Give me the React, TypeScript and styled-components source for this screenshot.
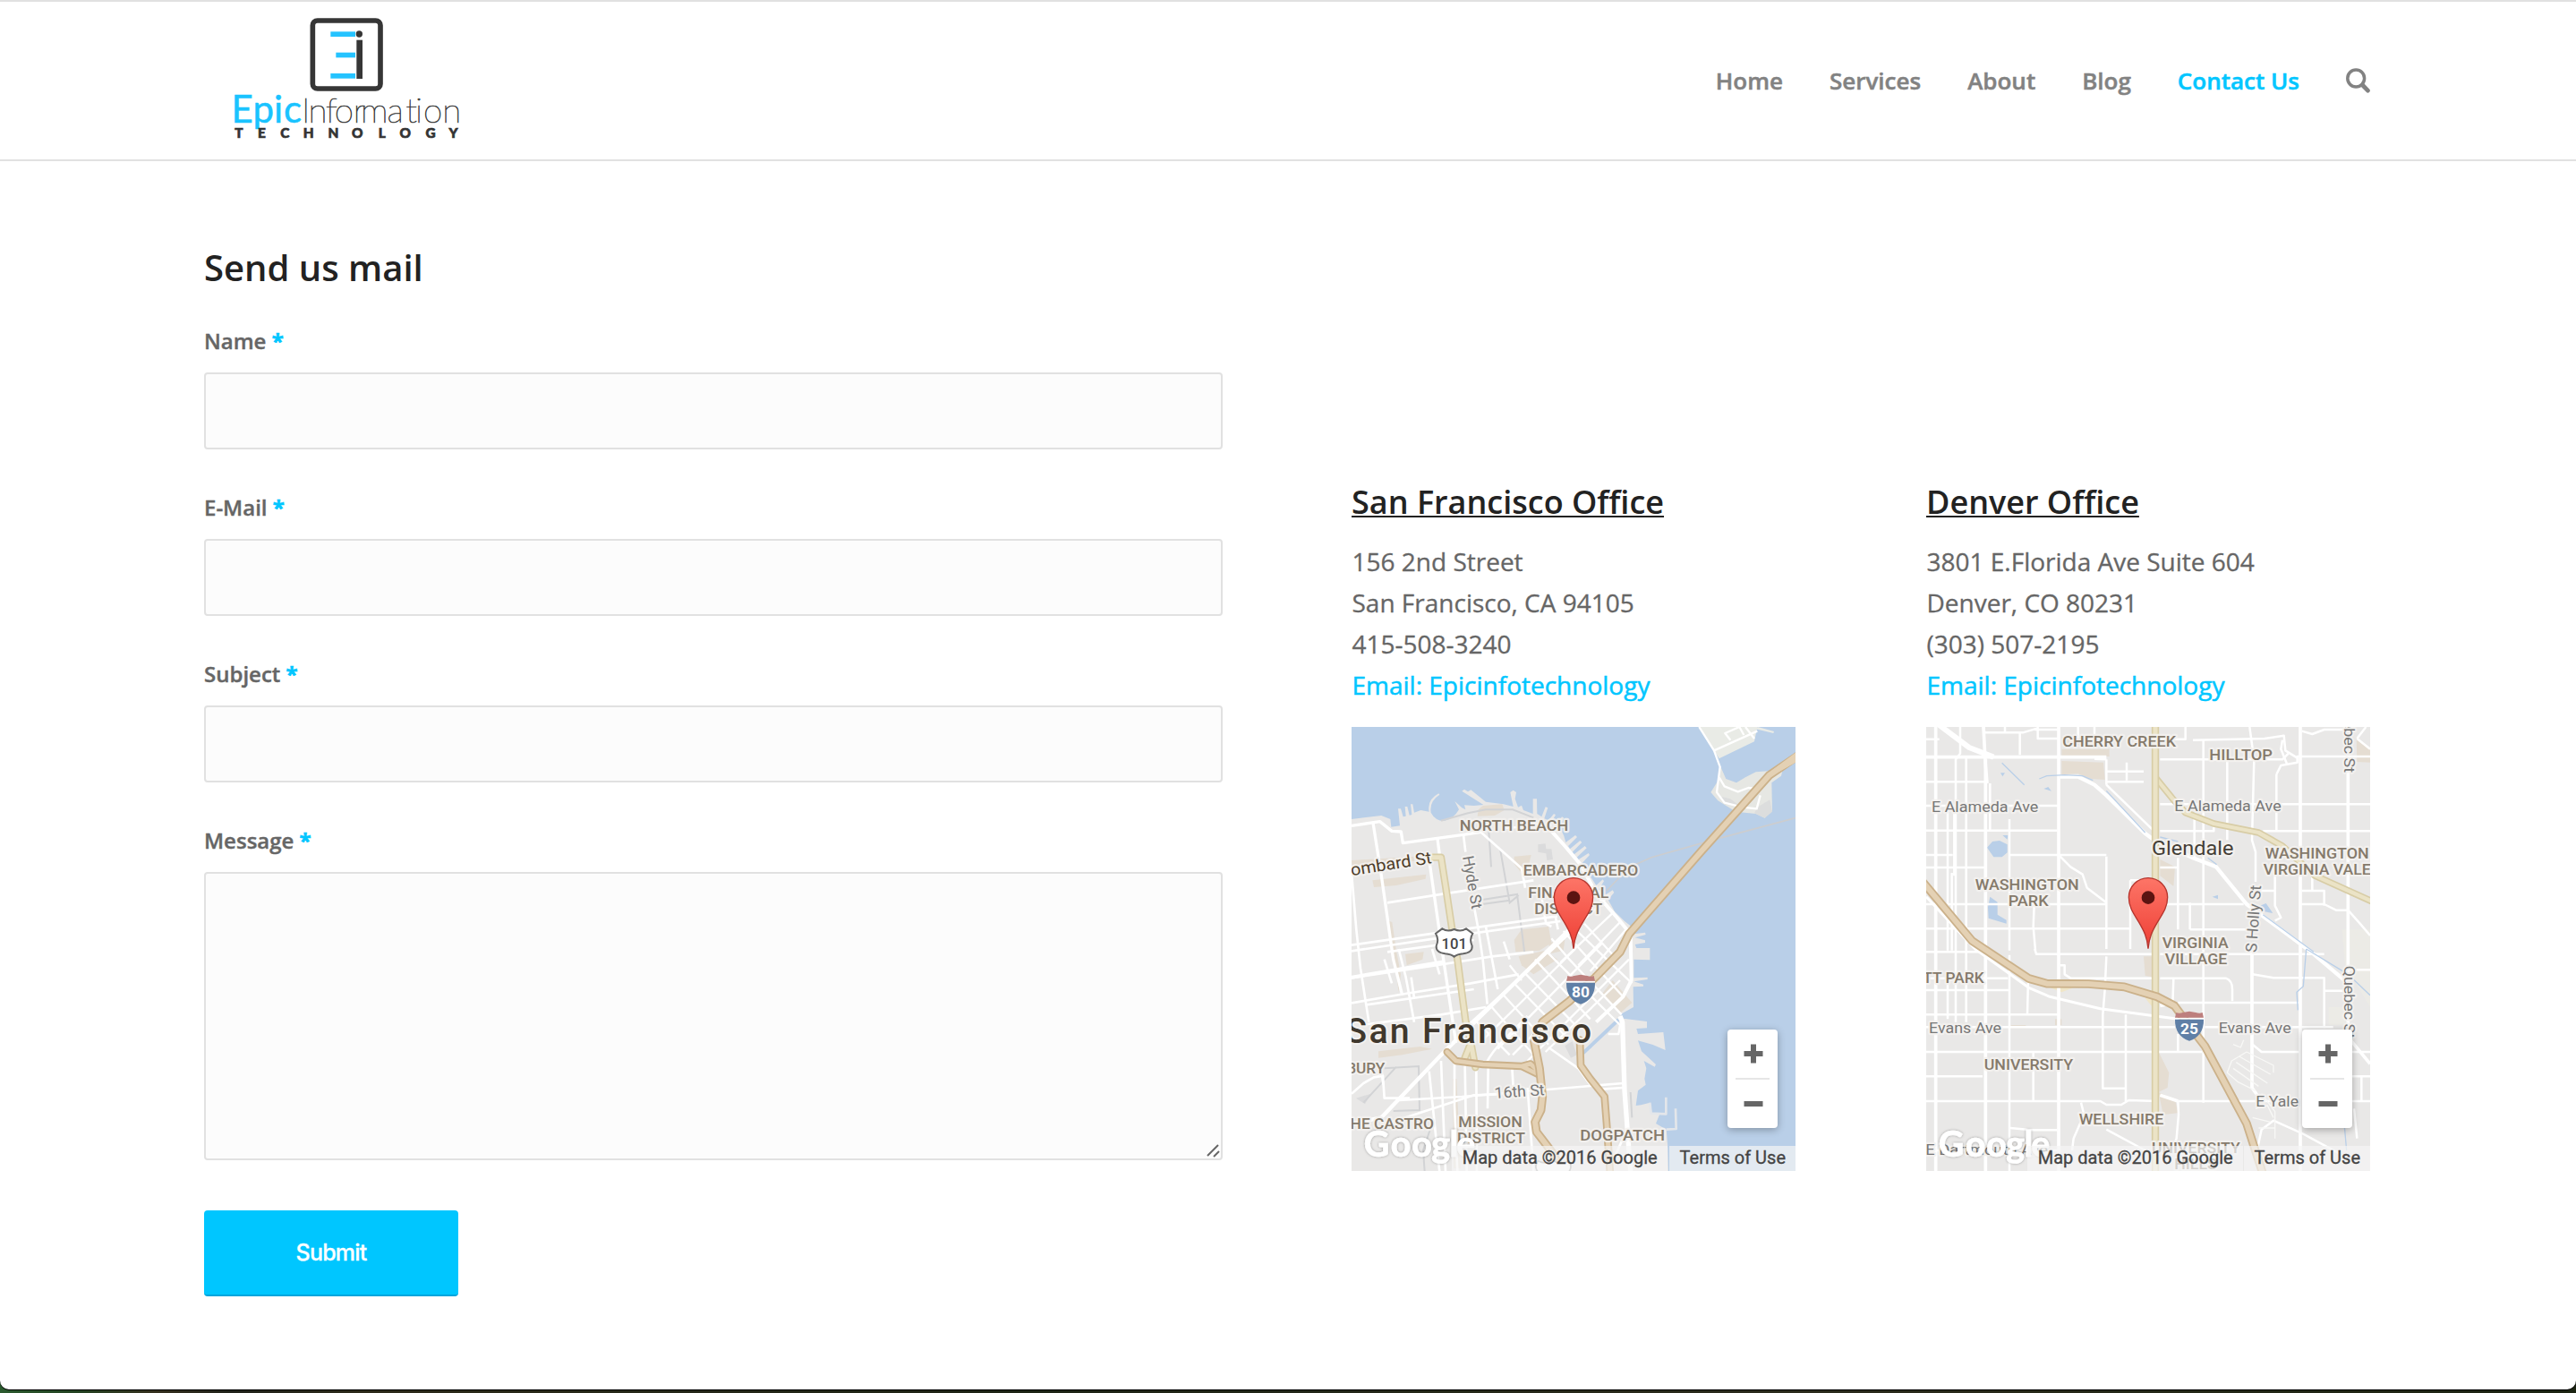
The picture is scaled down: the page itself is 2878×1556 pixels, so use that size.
import React from 'react';
import styled, { createGlobalStyle } from 'styled-components';

const accent = '#00c6ff';

const GlobalStyle = createGlobalStyle`
  * { box-sizing: border-box; }
  body {
    margin: 0;
    background: #2a2819;
    font-family: "Open Sans", "Noto Sans", sans-serif;
    overflow: hidden;
  }
`;

const Desktop = styled.div`
  height: 1556px;
  background: linear-gradient(90deg, #2b5a2e, #234222 3%, #35301e 6%, #20221a 9%, #2c2a1a 14%, #1d2415 40%, #2b2b1c 70%, #1c2412);
`;
const Page = styled.div`
  height: 1552px;
  background: #fff;
  border-radius: 0 0 10px 10px;
  box-shadow: 0 1px 0 #000;
`;
const Header = styled.header`
  height: 180px;
  padding: 0 230px 0 228px;
  border-top: 2px solid #e1e1e1;
  border-bottom: 2px solid #e1e1e1;
  display: flex;
  justify-content: space-between;
  align-items: center;
`;
const LogoLink = styled.a`
  display: block;
  width: 320px;
  height: 176px;
`;
const Nav = styled.nav`
  display: flex;
  align-items: center;
  gap: 52px;
`;
const NavLink = styled.a<{ $active?: boolean }>`
  font-size: 26px;
  line-height: 40px;
  font-weight: 600;
  color: ${(p) => (p.$active ? accent : '#828282')};
  -webkit-text-stroke: 0.5px currentColor;
`;
const Main = styled.main`
  display: flex;
  padding: 97px 230px 0 228px;
`;
const Form = styled.form`
  width: 1138px;
  margin-right: 144px;
`;
const Title = styled.h3`
  margin: 0 0 40px;
  font-size: 40px;
  line-height: 44px;
  font-weight: 600;
  color: #222;
`;
const Field = styled.label`
  display: flex;
  flex-direction: column;
  gap: 15px;
  margin-bottom: 45px;
`;
const Caption = styled.span`
  font-size: 24px;
  line-height: 40px;
  font-weight: 600;
  color: #666;
  -webkit-text-stroke: 0.4px currentColor;
`;
const Required = styled.abbr`
  font-weight: 700;
  color: ${accent};
  -webkit-text-stroke: 0.6px currentColor;
`;
const Input = styled.input`
  height: 86px;
  border: 2px solid #e1e1e1;
  border-radius: 4px;
  background: #fcfcfc;
  outline: none;
`;
const AreaFrame = styled.div`
  position: relative;
  height: 322px;
`;
const Area = styled.textarea`
  display: block;
  width: 100%;
  height: 100%;
  border: 2px solid #e1e1e1;
  border-radius: 4px;
  background: #fcfcfc;
  resize: none;
  outline: none;
`;
const Grip = styled.svg`
  position: absolute;
  right: 2px;
  bottom: 2px;
`;
const Submit = styled.button`
  display: block;
  width: 284px;
  height: 96px;
  margin-top: 56px;
  padding: 0;
  border: 0;
  border-bottom: 2px solid #00a5dc;
  border-radius: 4px;
  background: ${accent};
  color: #fff;
  font: 500 25px/94px Inter, "Liberation Sans", sans-serif;
  letter-spacing: -0.8px;
  -webkit-text-stroke: 0.3px #fff;
`;
const Offices = styled.section`
  display: flex;
  gap: 146px;
  padding-top: 264px;
`;
const Office = styled.article`
  width: 496px;
`;
const OfficeTitle = styled.h3`
  margin: 0 0 23px;
  font-size: 36px;
  line-height: 40px;
  font-weight: 600;
  color: #222;
  text-decoration: underline;
  text-decoration-thickness: 2px;
  text-underline-offset: 2px;
  text-decoration-skip-ink: none;
`;
const Line = styled.div`
  padding-left: 0.5px;
  font-size: 28px;
  line-height: 46px;
  color: #666;
  -webkit-text-stroke: 0.3px currentColor;
`;
const MailLink = styled.a`
  color: ${accent};
  -webkit-text-stroke: 0.5px currentColor;
`;
const MapFrame = styled.div`
  position: relative;
  width: 496px;
  height: 496px;
  margin-top: 24px;
  overflow: hidden;
`;
const ZoomBox = styled.div`
  position: absolute;
  right: 20px;
  bottom: 48px;
  width: 56px;
  height: 110px;
  display: flex;
  flex-direction: column;
  align-items: center;
  border-radius: 4px;
  background: #fff;
  box-shadow: 0 2px 8px rgba(0, 0, 0, 0.3);
`;
const ZoomButton = styled.div`
  flex: 1;
  display: flex;
  align-items: center;
  padding-left: 2px;
`;
const Divider = styled.div`
  width: 38px;
  height: 2px;
  background: #e6e6e6;
`;
const Credits = styled.div<{ $gap: number }>`
  position: absolute;
  right: 0;
  bottom: 0;
  display: flex;
  gap: ${(p) => p.$gap}px;
`;
const Credit = styled.span`
  height: 28px;
  padding: 0 11px 0 12px;
  background: rgba(245, 245, 245, 0.7);
  font: 400 20px/27px Roboto, sans-serif;
  color: #444;
  -webkit-text-stroke: 0.3px #444;
  white-space: nowrap;
`;

const Logo = () => (
  <svg width="320" height="176" viewBox="84 6 960 528">
    <rect x="448" y="69" width="227" height="228" rx="16" fill="none" stroke="#363636" strokeWidth="17" />
    <g fill="#25c3ff">
      <rect x="508" y="106" width="83" height="17" />
      <rect x="526" y="176" width="65" height="17" />
      <rect x="508" y="246" width="83" height="17" />
    </g>
    <circle cx="604" cy="114" r="11" fill="#363636" />
    <rect x="595" y="134" width="20" height="130" fill="#363636" />
    <g fontFamily="Lato" textAnchor="middle">
      <text y="410" fontSize="126" fill="#19c3ff" stroke="#19c3ff" strokeWidth="1.5" fontWeight="400" x="212 283 333 381">Epic</text>
      <text y="410" fontSize="116" fill="#3c3c3c" fontWeight="100" stroke="#3c3c3c" strokeWidth="2.2" x="425 465 511 553 604 655 725 779 804 851 914">Information</text>
      <text y="463" fontSize="46" fill="#333" stroke="#333" strokeWidth="2" fontWeight="900" x="201 277 355 434 517 598 680 758 843 920">TECHNOLOGY</text>
    </g>
  </svg>
);

const SearchIcon = () => (
  <svg width="27" height="28" viewBox="0 0 27 28" fill="none" stroke="#828282">
    <circle cx="11.2" cy="11.5" r="9.4" strokeWidth="3.5" />
    <path d="M18.5 19L24.4 25.2" strokeWidth="4.8" strokeLinecap="round" />
  </svg>
);

type Label = {
  t: string; x: number; y: number; w: number;
  size?: number; weight?: number; fill?: string; rot?: number; spaced?: boolean;
};

const Labels = ({ items }: { items: Label[] }) => (
  <g fontFamily="Roboto, sans-serif" stroke="#f4f2ef" strokeOpacity="0.9" strokeWidth="13" strokeLinejoin="round" paintOrder="stroke">
    {items.map((l, i) => (
      <text
        key={i}
        x={l.x}
        y={l.y}
        fontSize={l.size ?? 52}
        fontWeight={l.weight ?? 500}
        fill={l.fill ?? '#857a6b'}
        textLength={l.w}
        lengthAdjust={l.spaced ? 'spacing' : 'spacingAndGlyphs'}
        transform={l.rot ? `rotate(${l.rot} ${l.x} ${l.y})` : undefined}
      >
        {l.t}
      </text>
    ))}
  </g>
);

const Road = ({ d, w, edge, fill, line }: { d: string; w: number; edge: string; fill: string; line: number }) => (
  <g fill="none" strokeLinecap="round" strokeLinejoin="round">
    <path d={d} stroke={edge} strokeWidth={w} />
    <path d={d} stroke={fill} strokeWidth={w - line * 2} />
  </g>
);
const Freeway = ({ d, w = 29 }: { d: string; w?: number }) => <Road d={d} w={w} edge="#cbb18a" fill="#e4d1b4" line={5.5} />;
const Highway = ({ d, w = 25 }: { d: string; w?: number }) => <Road d={d} w={w} edge="#d8cda6" fill="#ebe3c6" line={5} />;

const Pin = ({ x }: { x: number }) => (
  <g transform={`translate(${x} 0)`}>
    <path
      d="M0 764C-3 725 -14 705 -32 674C-52 642 -65 622 -65 592A65 65 0 0 1 65 592C65 622 52 642 32 674C14 705 3 725 0 764Z"
      fill="url(#pinFill)"
      stroke="#b5352e"
      strokeWidth="4"
    />
    <circle cy="593" r="22" fill="#5c1411" />
  </g>
);

const Interstate = ({ x, y, n }: { x: number; y: number; n: string }) => (
  <g transform={`translate(${x} ${y})`}>
    <path d="M-44 -54Q-34 -49 -22 -54L0 -58L22 -54Q34 -49 44 -54L48 -37H-48Z" fill="#bd7f7d" />
    <path d="M-48 -36H48V-31H-48Z" fill="#fff" />
    <path d="M-48 -31H48C49 5 32 31 0 41C-32 31 -49 5 -48 -31Z" fill="#5f7fa6" />
    <text y="18" fontFamily="Roboto" fontSize="52" fontWeight="700" fill="#fff" textAnchor="middle">{n}</text>
  </g>
);

const Watermark = ({ dx }: { dx: number }) => (
  <g filter="url(#soft)">
    <text
      y="1460"
      fontFamily="Lato"
      fontSize="118"
      fontWeight="700"
      fill="#fff"
      stroke="#fff"
      strokeWidth="2"
      textAnchor="middle"
      x={[114, 195, 266, 329, 373, 413].map((v) => v + dx).join(' ')}
    >
      Google
    </text>
  </g>
);

const Defs = () => (
  <defs>
    <linearGradient id="pinFill" x1="0" y1="0" x2="0" y2="1">
      <stop offset="0" stopColor="#fd7567" />
      <stop offset="1" stopColor="#ee3f35" />
    </linearGradient>
    <filter id="soft" x="-10%" y="-20%" width="120%" height="140%">
      <feDropShadow dx="0" dy="0" stdDeviation="4" floodColor="#000" floodOpacity="0.35" />
    </filter>
  </defs>
);

const sfLand =
  'M30 330L130 318L160 330L163 356L192 352L186 295L195 295L203 322L212 320L209 288L217 288L224 317L232 315L228 280L235 280L240 308L262 300L290 305Q282 265 322 244L325 248Q290 270 296 308Q310 335 340 336Q372 330 390 298L376 270L400 292L412 298L408 283L440 285L472 282L400 236L408 230L420 238L430 232L480 272L540 280L572 288L562 240L572 233L582 240L578 262L588 290L600 284L606 300L638 312L638 262L651 262L652 312L667 322L680 289L688 292L676 328L690 334L708 312L714 316L700 340L718 346L735 322L742 326L728 356L742 386L748 408L780 384L786 390L756 420L762 430L796 402L802 408L770 440L776 448L812 420L818 427L785 458L790 466L824 444L828 450L800 480L812 500L836 530L850 552L872 532L876 538L858 566L880 584L905 568L910 576L890 600L912 640L945 672L968 690L975 715L1014 710L1016 717L980 727L1014 736L1014 744L980 750L985 762L1030 762L1030 802L976 800L976 862L1022 860L1022 867L976 874L1008 884L1008 890L974 892L975 960L930 985L940 998L1020 1008L1020 1030L985 1032L990 1050L1075 1044L1082 1104L1040 1086L990 1072L1002 1108L1050 1152L1046 1160L1010 1140L1018 1165L1012 1200L1016 1220L990 1240L983 1290L1000 1288L1030 1280L1034 1316L1062 1320L1050 1350L1085 1370L1090 1430L1092 1512L30 1512Z';

const sfStreets = [
  'M30 352L125 338L165 370L196 372L202 410L405 382L470 372',
  'M102 342L130 520L170 800L200 920',
  'M318 395L325 450M290 465L335 780L380 1080',
  'M405 382L412 440M440 620L455 700L470 800L485 950',
  'M30 510L46 700L60 830L88 1010',
  'M150 610L340 580L640 535',
  'M465 375L600 495L612 560M540 360L700 350',
  'M660 550L682 680L700 690M710 640L722 700',
  'M30 752L310 712L720 655',
  'M30 772L310 730L730 672',
  'M150 775L440 735',
  'M30 862L300 822L500 790L640 775',
  'M30 946L210 915L430 880L590 850',
  'M80 952L440 900',
  'M140 800L165 880M188 765L212 860L240 1010M230 860L240 930',
  'M300 765L325 850M480 690L520 900',
  'M60 1020L330 985L480 960M540 740L560 800',
  'M150 1350L440 1255L520 1252',
  'M190 1272L400 1260L940 1215',
  'M290 1175L325 1512M330 1140L345 1512M410 1155L416 1512M448 1160L450 1512M488 1160L486 1300M568 1160L572 1230M620 1230L640 1512',
  'M375 1150L375 1290L385 1512',
  'M30 1250L70 1215L105 1195L135 1190L140 1265L225 1265',
  'M72 1150L128 1150L136 1220',
  'M480 1150Q500 1110 540 1070L620 990',
  'M690 1095L790 1165L830 1220',
  'M870 1235L940 1230M890 1510L940 1400',
];

const sfSoma = [
  'M420 1020L700 765', 'M470 1070L780 765', 'M520 1100L870 745', 'M570 1120L850 840', 'M620 1140L960 800', 'M680 1110L930 870',
  'M500 960L640 1120', 'M540 920L690 1085', 'M575 880L740 1050', 'M610 845L790 1030', 'M645 800L830 1000', 'M680 770L930 1020L925 1050L890 1050', 'M700 730L760 800L935 985',
  'M740 705L940 925', 'M770 690L970 880', 'M810 680L920 800', 'M690 780L880 600', 'M730 810L910 640', 'M790 820L935 670', 'M830 840L950 700', 'M560 820L600 870', 'M440 1000L560 1120',
];

const SanFranciscoMap = () => (
  <svg width="496" height="496" viewBox="30 21 1488 1488">
    <Defs />
    <rect x="30" y="21" width="1488" height="1488" fill="#b9cfe8" />
    <path d={sfLand} fill="#e9e8e7" />
    <path d="M1195 21H1390L1380 70L1262 127L1245 100ZM1392 21L1446 36L1444 42L1385 28Z" fill="#e9ebe6" />
    <path d="M1265 150L1285 195L1320 208L1350 190L1385 172L1475 165L1470 185L1438 208L1440 300L1415 326L1385 312L1318 305L1258 268L1234 240L1256 205Z" fill="#e6e7e3" />
    <path d="M1390 290L1432 265L1440 305L1415 326L1380 310ZM1270 255L1300 262L1330 285L1280 280Z" fill="#dcdddd" />
    <path d="M1518 326L1240 400L1035 458L960 492L885 570" fill="none" stroke="#cccdcf" strokeWidth="5" />
    <g fill="#e5ddd2">
      <path d="M470 285L535 280L542 300L510 318L452 320L455 298Z" />
      <path d="M575 455L632 450L625 480L600 510L575 480Z" />
      <path d="M100 535L280 515L278 530L180 552L105 558Z" />
      <path d="M30 468L240 455L240 470L32 490Z" />
      <path d="M600 700L690 690L700 745L660 770L580 775L575 735Z" />
      <path d="M905 870L970 945L930 980L870 915Z" />
      <path d="M150 670L166 675L180 770L195 850L188 910L170 780Z" />
      <path d="M590 790L680 770L720 800L640 850L600 820Z" />
      <path d="M120 1108L260 1092L300 1100L200 1120L120 1130Z" />
      <path d="M370 1200L382 1200L395 1500L372 1500Z" />
      <path d="M210 782L272 775L268 800L215 820Z" />
      <path d="M690 745L745 735L740 770L700 780Z" />
    </g>
    <path d="M655 415L680 412L682 430L700 430L705 465L685 468L682 445L655 440ZM45 1265L95 1250L75 1285ZM745 1090L770 1075L785 1120L765 1130Z" fill="#dbdbdc" />
    <g fill="none" stroke="#d2d3d5" strokeWidth="6">
      <path d="M330 335L420 310L480 298L570 298L640 325" />
      <path d="M490 370L498 490M528 430L560 610L590 585M468 600L585 582L610 780M468 615L560 602" />
      <path d="M140 1165L255 1158L258 1305L170 1308M70 1280L180 1160M275 1510L270 1440L300 1350M965 1245L970 1330" />
    </g>
    <path d="M925 1002L805 1115" stroke="#b9cfe8" strokeWidth="12" />
    <g fill="none" stroke="#fff" strokeLinejoin="round">
      {sfStreets.map((d, i) => <path key={d} d={d} strokeWidth={i < 3 ? 10 : 8} />)}
      {sfSoma.map((d) => <path key={d} d={d} strokeWidth="7" />)}
      <path d="M760 700L345 1105L130 1330L30 1350" strokeWidth="13" />
      <path d="M640 345L700 370L745 420L800 485L850 580L920 660L965 715L968 870L940 925L850 1010" strokeWidth="12" />
      <path d="M930 990L938 1010L945 1240L965 1512" strokeWidth="16" />
      <path d="M1195 21L1245 100L1265 155L1254 240L1280 275L1340 290L1388 295L1400 250M1262 190L1280 220L1325 238L1360 225L1400 230M1245 100L1390 35M1300 65L1282 42L1330 21M1330 21L1345 48M1350 21L1380 60" strokeWidth="7" />
      <path d="M30 860L340 808" strokeWidth="12" />
      <path d="M1030 1280L1034 1316L1084 1318L1084 1262M1116 1300L1118 1368L1085 1370" stroke="#e3e6ea" strokeWidth="8" />
    </g>
    <Highway d="M300 458L330 458L346 560L370 720L385 800L412 1005L430 1080L410 1130M430 1080L445 1162" />
    <Freeway d="M350 1110L380 1140L470 1152L600 1158L655 1185M600 1158L630 1150L662 1180" w={25} />
    <Freeway d="M795 1070L798 1155L830 1200L878 1260L885 1350L897 1520" w={26} />
    <Freeway d="M1540 108L1430 183L1200 440L960 715L930 775L850 857L760 940L670 1010L642 1075L660 1165L670 1260L665 1305L645 1345L650 1378L705 1450L740 1520" />
    <path d="M1428 183L1540 100L1540 120Z" fill="#e4d1b4" stroke="#e4d1b4" strokeWidth="14" />
    <g transform="translate(374 747)">
      <path d="M-40 -50Q-22 -38 0 -48Q22 -38 40 -50L62 -34Q50 -14 60 8Q62 30 30 34Q10 36 0 44Q-10 36 -30 34Q-62 30 -60 8Q-50 -14 -62 -34Z" fill="#fff" stroke="#666" strokeWidth="6" />
      <text y="18" fontFamily="Roboto" fontSize="50" fontWeight="500" fill="#444" textAnchor="middle">101</text>
    </g>
    <path d="M655 1512Q640 1495 655 1475Q680 1488 706 1475Q735 1488 758 1475Q772 1495 758 1512Z" fill="#fff" stroke="#999" strokeWidth="5" />
    <Labels
      items={[
        { t: 'NORTH BEACH', x: 392, y: 370, w: 365 },
        { t: 'EMBARCADERO', x: 605, y: 519, w: 386 },
        { t: 'FINANCIAL', x: 622, y: 595, w: 270 },
        { t: 'DISTRICT', x: 643, y: 648, w: 228 },
        { t: 'ombard St', x: 30, y: 520, w: 274, weight: 400, size: 56, fill: '#4d3c28', rot: -9 },
        { t: 'Hyde St', x: 402, y: 456, w: 180, weight: 400, size: 52, fill: '#777', rot: 80 },
        { t: 'San Francisco', x: 10, y: 1081, w: 824, weight: 500, size: 118, fill: '#40382d', spaced: true },
        { t: 'ASHBURY', x: -90, y: 1182, w: 232 },
        { t: '16th St', x: 510, y: 1266, w: 168, weight: 400, fill: '#777', rot: -4 },
        { t: 'THE CASTRO', x: -6, y: 1368, w: 312 },
        { t: 'MISSION', x: 388, y: 1363, w: 214 },
        { t: 'DISTRICT', x: 384, y: 1417, w: 228 },
        { t: 'DOGPATCH', x: 796, y: 1407, w: 284 },
      ]}
    />
    <Interstate x={798} y={909} n="80" />
    <Pin x={774} />
    <Watermark dx={0} />
  </svg>
);

const denverThin = [
  'M108 300V770M130 300V520M122 510V770M150 21V110L135 130V1010M170 120V1010M68 765V1010M108 850V1000',
  'M36 62H80M36 205H240M228 21L232 40H360L410 25M350 40V115M410 21V60L480 60M400 30H480M545 21V60M600 21V60',
  'M36 285H480M36 368H475M36 450H125M36 492H232M318 450H640M36 615H640M36 697H720M36 775H230M36 863H310M36 903H315M36 985H480',
  'M315 330V770M315 785V1512M250 210V370M398 620L395 690L402 770M378 860L375 985M395 1110V1275M300 21V40',
  'M480 450L520 490L560 515L575 560L640 610M640 455V765M720 535V765M720 535H800M640 790L635 900L628 985V1232H705',
  'M640 130V215M640 170H765M708 140V200M640 205H765M640 130L600 128M820 62H905V21M820 130H1230L1250 110',
  'M820 280H1524M820 370H1000V350M820 492H880V460M880 490V700M920 610V700M820 615H1100M920 700H1120M935 330V460',
  'M965 65V775M1045 130V400M1120 21L1135 130L1128 400L1140 440V540M1210 180V370M1165 370H1524M1210 180L1225 150L1280 140V120H1524',
  'M930 65L1170 60L1235 50L1240 100L1280 125M1230 65L1225 95L1245 145M1295 35L1330 45L1370 30H1440M1480 60L1524 95M1480 60L1510 21',
  'M1130 570H1205M1205 500V620L1225 660L1205 670M1330 480V570M1295 570H1370V620M1290 615H1370L1410 635H1450L1490 680L1524 720',
  'M400 765L405 782H800M820 782H1370M485 820H500V850L520 863H800M820 863H1040Q1062 870 1062 900V940',
  'M865 865L862 950M965 770V1280M880 1050V1110M880 945H1290M1130 850L1200 862H1370V1030M1370 905H1440M1440 835H1524',
  'M36 1027H870M970 1027H1400M36 1110H960M36 1192H225M36 1275H620L640 1287H690L715 1272L810 1275M880 1275H1290M705 985V1275',
  'M1130 1085L1160 1110H1290M1440 1110H1524M555 1280L565 1320L530 1400L525 1440M880 1275L882 1320L875 1400L860 1440M318 1365L390 1372H475',
  'M480 1365V1440M1145 1440L1160 1370L1200 1340L1300 1385L1420 1450M1470 1300L1480 1400M1450 1275H1524M1495 1192V1275M1450 1192H1524',
  'M36 1440H480M640 1370L770 1440',
];
const denverWide = [
  'M68 21V1512', 'M235 130V1512', 'M480 21V1512', 'M1290 21V1512', 'M1450 150V1060', 'M1128 765V1230L1160 1275', 'M36 122H640',
  'M228 21L235 150L240 210',
];

const DenverMap = () => (
  <svg width="496" height="496" viewBox="36 21 1488 1488">
    <rect x="36" y="21" width="1488" height="1488" fill="#e9e8e7" />
    <path d="M1430 700H1524V960L1440 820ZM1385 960H1440V1020H1385Z" fill="#ecebe6" />
    <g fill="#e5ddd2">
      <path d="M490 135L630 140L635 198L590 195L545 178L490 180ZM490 95H650V120H490ZM490 55H600V80H490Z" />
      <path d="M820 465L870 490L865 555L820 520ZM765 790H800V860L770 855ZM815 1110L850 1180L845 1230L815 1245ZM815 1245L870 1270L880 1315L830 1320ZM1478 55L1524 95V140L1480 138Z" />
      <path d="M468 1000H490V1020H468ZM320 1020H370V1030H320Z" />
    </g>
    <path d="M440 890L530 895L490 910ZM770 930L800 920L795 960Z" fill="#f0e6c8" />
    <g fill="#b9cfe8">
      <path d="M240 425L258 405L282 402L308 415V442L290 457H262ZM292 384L310 384L308 398ZM250 590L275 608V650L305 668V680L245 662L243 625Z" />
      <path d="M285 175L300 175L292 187ZM430 228L445 222L456 236ZM995 590L1014 584V598ZM1155 620L1175 612L1198 645L1170 640Z" />
    </g>
    <g fill="none" stroke="#fff" strokeLinejoin="round">
      {denverThin.map((d) => <path key={d} d={d} strokeWidth="7.5" />)}
      {denverWide.map((d) => <path key={d} d={d} strokeWidth="11" />)}
      <path d="M60 0L180 90L262 122" strokeWidth="18" />
      <path d="M485 188L545 188L600 215L640 250L770 378L800 400L930 460L1008 490L1110 615L1320 770L1450 880" strokeWidth="13" />
      <path d="M640 215L800 370" strokeWidth="8" />
      <path d="M36 590L200 765L380 895L450 925L620 965L880 1000" strokeWidth="9" />
      <path d="M820 1255L880 1275M1450 1060L1524 1150M820 955L870 945" strokeWidth="11" />
      <path
        d="M1110 1110L1060 1140L1045 1180L1080 1210L1140 1240M1110 1110L1200 1155V1180M1085 1125L1190 1185M1075 1145L1180 1215M1065 1165L1150 1225M1065 1085L1090 1095L1100 1070M1140 1300L1180 1290L1200 1330M1130 1330L1190 1345M1150 1365H1205M1160 1250L1205 1310V1400"
        stroke="#f8f8f6"
        strokeWidth="4"
      />
    </g>
    <g fill="none" stroke="#b9cfe8" strokeWidth="4">
      <path d="M415 195L440 185L500 182L560 185L595 200M640 235L770 375M290 142L365 215M820 390L880 405M980 460L1010 482M1165 650L1335 775M1310 765L1450 850L1524 920M1310 765L1300 890L1278 910L1282 970M1438 1360L1445 1440" />
    </g>
    <Highway d="M808 195L865 265L905 308L1000 345L1150 375L1230 420L1340 520L1540 610" w={23} />
    <Highway d="M804 0V1540" />
    <Freeway d="M20 535L190 738L380 864L440 881L580 882L700 892L810 925L868 955L905 1005L970 1090L1110 1350L1165 1520" />
    <Labels
      items={[
        { t: 'CHERRY CREEK', x: 493, y: 88, w: 380 },
        { t: 'HILLTOP', x: 985, y: 132, w: 212 },
        { t: 'E Alameda Ave', x: 54, y: 305, w: 358, weight: 400, fill: '#777' },
        { t: 'E Alameda Ave', x: 868, y: 303, w: 358, weight: 400, fill: '#777' },
        { t: 'Glendale', x: 792, y: 449, w: 274, weight: 400, size: 68, fill: '#443e36' },
        { t: 'WASHINGTON', x: 1172, y: 463, w: 348 },
        { t: 'VIRGINIA VALE', x: 1166, y: 517, w: 360 },
        { t: 'WASHINGTON', x: 200, y: 568, w: 348 },
        { t: 'PARK', x: 311, y: 622, w: 135 },
        { t: 'VIRGINIA', x: 827, y: 763, w: 222 },
        { t: 'VILLAGE', x: 836, y: 817, w: 209 },
        { t: 'S Holly St', x: 1143, y: 778, w: 226, weight: 400, fill: '#777', rot: -86 },
        { t: 'Quebec St', x: 1437, y: -70, w: 244, weight: 400, fill: '#777', rot: 90 },
        { t: 'Quebec St', x: 1437, y: 821, w: 244, weight: 400, fill: '#777', rot: 90 },
        { t: 'PLATT PARK', x: -68, y: 879, w: 298 },
        { t: 'Evans Ave', x: 45, y: 1047, w: 243, weight: 400, fill: '#777' },
        { t: 'Evans Ave', x: 1016, y: 1047, w: 243, weight: 400, fill: '#777' },
        { t: 'UNIVERSITY', x: 230, y: 1169, w: 298 },
        { t: 'WELLSHIRE', x: 548, y: 1353, w: 284 },
        { t: 'E Yale', x: 1141, y: 1293, w: 143, weight: 400, fill: '#777' },
        { t: 'UNIVERSITY', x: 792, y: 1449, w: 296 },
        { t: 'HILLS', x: 868, y: 1503, w: 142 },
        { t: 'E Dartmouth Ave', x: 34, y: 1454, w: 410, weight: 400, fill: '#777' },
      ]}
    />
    <Interstate x={918} y={1032} n="25" />
    <Pin x={780} />
    <Watermark dx={6} />
  </svg>
);

const ZoomControl = () => (
  <ZoomBox>
    <ZoomButton>
      <svg width="22" height="22" viewBox="0 0 22 22" fill="#666">
        <path d="M8 0.5H14V8H21.5V14H14V21.5H8V14H0.5V8H8Z" />
      </svg>
    </ZoomButton>
    <Divider />
    <ZoomButton>
      <svg width="22" height="22" viewBox="0 0 22 22" fill="#666">
        <path d="M0.5 8H21.5V14H0.5Z" />
      </svg>
    </ZoomButton>
  </ZoomBox>
);

const navItems = ['Home', 'Services', 'About', 'Blog', 'Contact Us'];
const fields = ['Name', 'E-Mail', 'Subject'];
const offices = [
  { name: 'San Francisco Office', lines: ['156 2nd Street', 'San Francisco, CA 94105', '415-508-3240'], map: <SanFranciscoMap />, gap: 2 },
  { name: 'Denver Office', lines: ['3801 E.Florida Ave Suite 604', 'Denver, CO 80231', '(303) 507-2195'], map: <DenverMap />, gap: 1 },
];

export default function App() {
  return (
    <Desktop>
      <GlobalStyle />
      <Page>
        <Header>
          <LogoLink>
            <Logo />
          </LogoLink>
          <Nav>
            {navItems.map((n) => (
              <NavLink key={n} $active={n === 'Contact Us'}>{n}</NavLink>
            ))}
            <SearchIcon />
          </Nav>
        </Header>
        <Main>
          <Form>
            <Title>Send us mail</Title>
            {fields.map((f) => (
              <Field key={f}>
                <Caption>{f} <Required>*</Required></Caption>
                <Input />
              </Field>
            ))}
            <Field>
              <Caption>Message <Required>*</Required></Caption>
              <AreaFrame>
                <Area />
                <Grip width="16" height="16" viewBox="0 0 16 16" stroke="#666" strokeWidth="2">
                  <path d="M1 13L13 1M8 14L14 8" />
                </Grip>
              </AreaFrame>
            </Field>
            <Submit type="button">Submit</Submit>
          </Form>
          <Offices>
            {offices.map((o) => (
              <Office key={o.name}>
                <OfficeTitle>{o.name}</OfficeTitle>
                {o.lines.map((l) => <Line key={l}>{l}</Line>)}
                <Line><MailLink>Email: Epicinfotechnology</MailLink></Line>
                <MapFrame>
                  {o.map}
                  <ZoomControl />
                  <Credits $gap={o.gap}>
                    <Credit>Map data ©2016 Google</Credit>
                    <Credit>Terms of Use</Credit>
                  </Credits>
                </MapFrame>
              </Office>
            ))}
          </Offices>
        </Main>
      </Page>
    </Desktop>
  );
}
